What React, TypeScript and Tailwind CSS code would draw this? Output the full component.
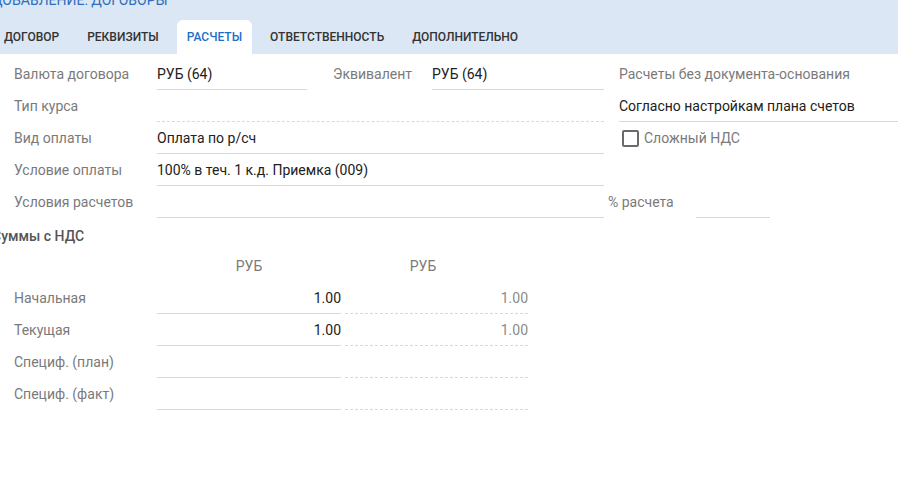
import React from "react";

const font = { fontFamily: "Roboto, 'Noto Sans', sans-serif" };

const TABS = ["ДОГОВОР", "РЕКВИЗИТЫ", "РАСЧЕТЫ", "ОТВЕТСТВЕННОСТЬ", "ДОПОЛНИТЕЛЬНО"];

function Label({ children, className = "" }: { children?: React.ReactNode; className?: string }) {
  return <div className={"flex h-8 items-center text-sm text-[#7a7a7a] " + className}>{children}</div>;
}

function Field({ value, width, dashed, className = "" }: { value?: string; width: string; dashed?: boolean; className?: string }) {
  return (
    <div
      className={
        "flex h-8 items-center border-b text-sm text-[#212121] " +
        (dashed ? "border-dashed border-[#d6dbe3] " : "border-[#d0d9e6] ") +
        width +
        " " +
        className
      }
    >
      {value}
    </div>
  );
}

function SumRow({ label, a, b }: { label: string; a?: string; b?: string }) {
  return (
    <div className="flex">
      <Label className="w-[143px]">{label}</Label>
      <div className="flex h-8 w-[184px] items-center justify-end border-b border-[#d0d9e6] text-sm text-[#212121]">{a}</div>
      <div className="ml-1 flex h-8 w-[183px] items-center justify-end border-b border-dashed border-[#d6dbe3] text-sm text-[#8a8a8a]">{b}</div>
    </div>
  );
}

export default function App() {
  return (
    <div className="h-[502px] w-[898px] overflow-hidden bg-white" style={font}>
      <div className="flex h-[54px] flex-col bg-[#dce7f5]">
        <div className="-ml-[8px] -mt-[10px] h-[20px] whitespace-nowrap text-sm leading-[20px] text-[#2f6ebd]">ДОБАВЛЕНИЕ: ДОГОВОРЫ</div>
        <div className="-ml-[6px] mt-[10px] flex gap-2">
          {TABS.map((t) => (
            <div
              key={t}
              className={
                "flex h-[34px] items-center rounded-t-md px-[10px] text-xs font-medium " +
                (t === "РАСЧЕТЫ" ? "bg-white text-[#1e6fc8]" : "text-[#333333]")
              }
            >
              {t}
            </div>
          ))}
        </div>
      </div>

      <div className="pl-[14px] pt-1">
        <div className="flex">
          <Label className="w-[143px]">Валюта договора</Label>
          <Field value="РУБ (64)" width="w-[150px]" />
          <Label className="ml-[26px] w-[99px]">Эквивалент</Label>
          <Field value="РУБ (64)" width="w-[172px]" />
          <Label className="ml-[15px]">Расчеты без документа-основания</Label>
        </div>
        <div className="flex">
          <Label className="w-[143px]">Тип курса</Label>
          <Field width="w-[447px]" dashed />
          <Field value="Согласно настройкам плана счетов" width="flex-1" className="ml-[15px]" />
        </div>
        <div className="flex">
          <Label className="w-[143px]">Вид оплаты</Label>
          <Field value="Оплата по р/сч" width="w-[447px]" />
          <div className="ml-[18px] flex h-8 items-center gap-[5px] text-sm text-[#7a7a7a]">
            <span className="h-[17px] w-[17px] rounded-[2px] border-2 border-[#6b6b6b]" />
            Сложный НДС
          </div>
        </div>
        <div className="flex">
          <Label className="w-[143px]">Условие оплаты</Label>
          <Field value="100% в теч. 1 к.д. Приемка (009)" width="w-[447px]" />
        </div>
        <div className="flex">
          <Label className="w-[143px]">Условия расчетов</Label>
          <Field width="w-[447px]" />
          <Label className="ml-[4px] w-[88px]">% расчета</Label>
          <Field width="w-[74px]" />
        </div>

        <div className="-ml-[22px] flex h-[36px] items-center text-sm font-medium text-[#555555]">Суммы с НДС</div>

        <div className="flex h-[28px] pb-1 text-sm text-[#7a7a7a]">
          <div className="w-[143px]" />
          <div className="flex w-[184px] items-center justify-center">РУБ</div>
          <div className="ml-1 flex w-[156px] items-center justify-center">РУБ</div>
        </div>
        <SumRow label="Начальная" a="1.00" b="1.00" />
        <SumRow label="Текущая" a="1.00" b="1.00" />
        <SumRow label="Специф. (план)" />
        <SumRow label="Специф. (факт)" />
      </div>
    </div>
  );
}
